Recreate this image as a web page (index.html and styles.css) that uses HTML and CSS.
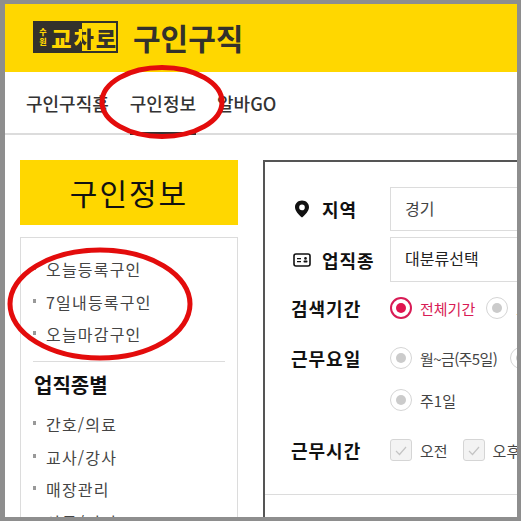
FILE: index.html
```html
<!DOCTYPE html>
<html lang="ko">
<head>
<meta charset="utf-8">
<title>구인정보</title>
<link rel="stylesheet" href="styles.css">
</head>
<body>
<div class="frame">
  <header class="top">
    <div class="logo">
      <span class="logo-city"><span>수</span><span>원</span></span>
      <span class="logo-dark">교</span>
      <span class="logo-half">차</span>
      <span class="logo-light">로</span>
    </div>
    <h1 class="top-title">구인구직</h1>
  </header>
  <nav class="nav">
    <a class="nav-item">구인구직홈</a>
    <a class="nav-item is-active">구인정보</a>
    <a class="nav-item">알바GO</a>
  </nav>
  <div class="content">
    <aside class="side">
      <h2 class="side-title">구인정보</h2>
      <div class="side-box">
        <ul class="side-list">
          <li>오늘등록구인</li>
          <li>7일내등록구인</li>
          <li>오늘마감구인</li>
        </ul>
        <hr class="side-rule">
        <h3 class="side-head">업직종별</h3>
        <ul class="side-list">
          <li>간호/의료</li>
          <li>교사/강사</li>
          <li>매장관리</li>
          <li>사무/경리</li>
        </ul>
      </div>
    </aside>
    <main class="panel">
      <div class="form">
        <div class="row row-select">
          <div class="label label-icon">
            <svg class="icon" width="16" height="18" viewBox="0 0 16 18"><path fill="#111" fill-rule="evenodd" d="M8 0.5C3.9 0.5 1 3.4 1 7.2c0 3.6 3.6 7.4 7 10.3 3.4-2.9 7-6.7 7-10.3C15 3.4 12.1 0.5 8 0.5zM8 4.6a2.8 2.8 0 1 1 0 5.6 2.8 2.8 0 0 1 0-5.6z"/></svg>
            <span>지역</span>
          </div>
          <div class="select">경기</div>
        </div>
        <div class="row row-select row-select-tall">
          <div class="label label-icon">
            <svg class="icon icon-card" width="18" height="14" viewBox="0 0 18 14"><rect x="1" y="1" width="16" height="12" rx="2" fill="none" stroke="#111" stroke-width="1.6"/><path fill="#111" d="M4 5h4v1.3H4zM4 8h4v1.3H4z"/><circle cx="12.5" cy="5.4" r="1.3" fill="#111"/><rect x="10.5" y="7.6" width="4" height="2" rx=".8" fill="#111"/></svg>
            <span>업직종</span>
          </div>
          <div class="select select-dark">대분류선택</div>
        </div>
        <div class="row row-period">
          <div class="label">검색기간</div>
          <div class="opts opts-period">
            <span class="opt opt-on"><i class="radio radio-on"></i>전체기간</span>
            <span class="opt"><i class="radio"></i>오늘</span>
          </div>
        </div>
        <div class="row row-days">
          <div class="label">근무요일</div>
          <div class="opts opts-wrap">
            <span class="opt"><i class="radio"></i><span class="tight">월~금(주5일)</span></span>
            <span class="opt"><i class="radio"></i>주6일</span>
            <span class="opt"><i class="radio"></i>주1일</span>
          </div>
        </div>
        <div class="row row-time">
          <div class="label">근무시간</div>
          <div class="opts">
            <span class="opt opt-check"><i class="check"><svg width="16" height="14" viewBox="0 0 16 14"><path d="M3 8l3.5 3.5L13 4" fill="none" stroke="#c4c4c4" stroke-width="1.2"/></svg></i>오전</span>
            <span class="opt opt-check"><i class="check"><svg width="16" height="14" viewBox="0 0 16 14"><path d="M3 8l3.5 3.5L13 4" fill="none" stroke="#c4c4c4" stroke-width="1.2"/></svg></i>오후</span>
          </div>
        </div>
      </div>
      <div class="panel-rule"></div>
    </main>
  </div>
  <svg class="marks" width="521" height="521" viewBox="0 0 521 521">
    <ellipse cx="162" cy="102" rx="60" ry="34.5" fill="none" stroke="#e30c0c" stroke-width="5"/>
    <ellipse cx="100" cy="304" rx="90" ry="54" fill="none" stroke="#e30c0c" stroke-width="5"/>
  </svg>
</div>
</body>
</html>
```
FILE: styles.css
```css
* { box-sizing: border-box; }
html, body { margin: 0; padding: 0; }
body {
  width: 521px;
  height: 521px;
  overflow: hidden;
  background: #fff;
  font-family: "Noto Sans CJK KR", "Noto Sans", sans-serif;
  color: #333;
}
.frame {
  position: relative;
  width: 521px;
  height: 521px;
  overflow: hidden;
  background: #fff;
  border-style: solid;
  border-color: #8e8e8e;
  border-width: 4px 4px 4px 5px;
}
h1, h2, h3, ul { margin: 0; padding: 0; }
ul { list-style: none; }

.top {
  display: flex;
  align-items: center;
  height: 68px;
  padding: 0 0 3px 28px;
  background: #ffd700;
}
.logo {
  display: flex;
  align-items: center;
  width: 85px;
  height: 32px;
  border: 2px solid #33312c;
  background: #33312c;
  font-weight: 900;
  font-size: 22px;
  line-height: 28px;
  margin-top: 1px;
}
.logo-city {
  display: flex;
  flex-direction: column;
  align-items: center;
  width: 16px;
  font-size: 8px;
  line-height: 10px;
  color: #ffd700;
}
.logo-dark { width: 22px; text-align: center; color: #ffd700; }
.logo-half {
  width: 24px;
  height: 100%;
  text-align: center;
  color: transparent;
  background:
    linear-gradient(90deg, #ffd700 0 42%, #33312c 42%) text,
    linear-gradient(90deg, #33312c 0 42%, #ffd700 42%);
}
.logo-light { flex: 1; height: 100%; text-align: center; color: #33312c; background: #ffd700; }
.top-title {
  margin-left: 15px;
  font-size: 30px;
  line-height: 36px;
  font-weight: 700;
  color: #33312c;
}

.nav {
  display: flex;
  gap: 21px;
  height: 63px;
  padding-left: 21px;
  border-bottom: 2px solid #dcdcdc;
}
.nav-item {
  height: 63px;
  line-height: 62px;
  font-size: 18px;
  font-weight: 500;
  color: #333;
}
.nav-item.is-active { border-bottom: 3px solid #333; }

.content {
  display: flex;
  align-items: flex-start;
  gap: 25px;
  padding: 25px 0 0 15px;
}
.side { flex: 0 0 218px; }
.side-title {
  height: 65px;
  margin-bottom: 12px;
  background: #ffd700;
  color: #111;
  text-align: center;
  font-size: 30px;
  line-height: 64px;
  font-weight: 400;
  letter-spacing: 2px;
}
.side-box {
  height: 400px;
  padding: 15px 12px 0;
  border: 1px solid #dcdcdc;
}
.side-list li {
  position: relative;
  height: 32.7px;
  padding-left: 13px;
  font-size: 16px;
  line-height: 32px;
  letter-spacing: 1.2px;
  color: #444;
}
.side-list li::before {
  content: "";
  position: absolute;
  left: 0;
  top: 13px;
  width: 3px;
  height: 4px;
  background: #999;
}
.side-rule {
  height: 1px;
  margin: 10px 0 0;
  border: 0;
  background: #dcdcdc;
}
.side-head {
  margin: 7px 0 7px 1px;
  font-size: 20px;
  line-height: 32px;
  font-weight: 700;
  color: #111;
}

.panel {
  flex: 0 0 400px;
  height: 400px;
  border: 2px solid #555;
  padding-top: 25px;
}
.row { display: flex; align-items: center; }
.row-select { height: 44px; margin-bottom: 6px; }
.row-select-tall { height: 45px; margin-bottom: 4px; }
.label {
  flex: 0 0 125px;
  padding-left: 26px;
  font-size: 18px;
  font-weight: 700;
  color: #111;
  letter-spacing: 1px;
}
.label-icon { display: flex; align-items: center; padding-left: 29px; }
.icon { flex: 0 0 auto; margin-right: 12px; }
.icon-card { margin-left: -1px; margin-right: 11px; }
.select {
  flex: 1;
  height: 100%;
  padding-left: 14px;
  border: 1px solid #dcdcdc;
  font-size: 16px;
  line-height: 41px;
  color: #444;
}
.select-dark { color: #222; }
.opts { display: flex; gap: 13px; flex: 1; min-width: 0; }
.opts-period { gap: 11px; }
.opts-wrap { flex-wrap: wrap; row-gap: 18px; }
.row-period { height: 44px; }
.row-days { align-items: flex-start; margin-top: 16px; }
.row-days .label { line-height: 24px; }
.row-time { margin-top: 25px; }
.opt {
  display: flex;
  align-items: center;
  flex: 0 0 auto;
  gap: 8px;
  height: 24px;
  font-size: 15px;
  color: #444;
}
.tight { letter-spacing: -0.6px; }
.opt-on { color: #d81b55; }
.opts-wrap .opt:nth-child(3) { flex-basis: 100%; }
.radio {
  display: flex;
  align-items: center;
  justify-content: center;
  width: 22px;
  height: 22px;
  border: 1px solid #d5d5d5;
  border-radius: 50%;
  background: #fff;
}
.radio::after {
  content: "";
  width: 10px;
  height: 10px;
  border-radius: 50%;
  background: #cbcbcb;
}
.radio-on { border: 2px solid #d81b55; }
.radio-on::after { background: #e0144f; }
.opt-check + .opt-check { margin-left: 2px; }
.check {
  display: flex;
  align-items: center;
  justify-content: center;
  width: 22px;
  height: 22px;
  border: 1px solid #d5d5d5;
  border-radius: 3px;
  background: #f3f3f3;
}
.panel-rule {
  height: 1px;
  margin-top: 31px;
  background: #dcdcdc;
}
.marks {
  position: absolute;
  left: -5px;
  top: -4px;
  pointer-events: none;
}
```
